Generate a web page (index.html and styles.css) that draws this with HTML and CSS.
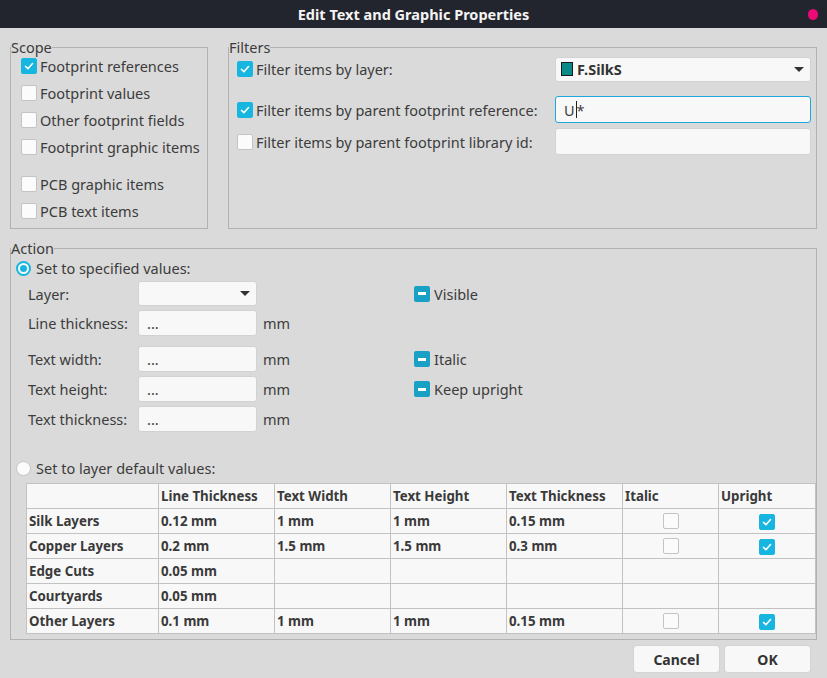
FILE: index.html
```html
<!DOCTYPE html>
<html>
<head>
<meta charset="utf-8">
<link rel="stylesheet" href="styles.css">
</head>
<body>
<div class="window">
  <div class="titlebar">
    <span class="title">Edit Text and Graphic Properties</span>
    <span class="close-dot"></span>
  </div>
  <div class="main">
    <div class="top-row">
      <fieldset class="group scope">
        <legend>Scope</legend>
        <div class="scope-list">
          <label class="check-row"><span class="cb checked"><svg viewBox="0 0 16 16"><polyline points="4,8.5 6.8,11.2 12,5.2"/></svg></span>Footprint references</label>
          <label class="check-row"><span class="cb"></span>Footprint values</label>
          <label class="check-row"><span class="cb"></span>Other footprint fields</label>
          <label class="check-row"><span class="cb"></span>Footprint graphic items</label>
          <label class="check-row spaced"><span class="cb"></span>PCB graphic items</label>
          <label class="check-row"><span class="cb"></span>PCB text items</label>
        </div>
      </fieldset>
      <fieldset class="group filters">
        <legend>Filters</legend>
        <div class="filters-body">
          <div class="filter-row r1">
            <label class="check-row"><span class="cb checked"><svg viewBox="0 0 16 16"><polyline points="4,8.5 6.8,11.2 12,5.2"/></svg></span>Filter items by layer:</label>
            <div class="combo big"><span class="swatch"></span><span class="combo-text">F.SilkS</span><span class="arrow"></span></div>
          </div>
          <div class="filter-row r2">
            <label class="check-row"><span class="cb checked"><svg viewBox="0 0 16 16"><polyline points="4,8.5 6.8,11.2 12,5.2"/></svg></span>Filter items by parent footprint reference:</label>
            <div class="field wide focus">U<span class="caret"></span>*</div>
          </div>
          <div class="filter-row r3">
            <label class="check-row"><span class="cb"></span>Filter items by parent footprint library id:</label>
            <div class="field wide"></div>
          </div>
        </div>
      </fieldset>
    </div>

    <fieldset class="group action">
      <legend>Action</legend>
      <div class="action-body">
        <label class="radio-row"><span class="radio on"><span class="dot"></span></span>Set to specified values:</label>
        <div class="form">
          <span class="lbl">Layer:</span>
          <div class="combo small"><span class="arrow"></span></div>
          <span></span>
          <label class="tri-row"><span class="tri"><span class="bar"></span></span>Visible</label>

          <span class="lbl">Line thickness:</span>
          <div class="field">...</div>
          <span class="unit">mm</span>
          <span></span>

          <span class="lbl gap">Text width:</span>
          <div class="field gap">...</div>
          <span class="unit gap">mm</span>
          <label class="tri-row gap"><span class="tri"><span class="bar"></span></span>Italic</label>

          <span class="lbl">Text height:</span>
          <div class="field">...</div>
          <span class="unit">mm</span>
          <label class="tri-row"><span class="tri"><span class="bar"></span></span>Keep upright</label>

          <span class="lbl">Text thickness:</span>
          <div class="field">...</div>
          <span class="unit">mm</span>
          <span></span>
        </div>
        <label class="radio-row second"><span class="radio"></span>Set to layer default values:</label>
        <table class="grid">
          <colgroup>
            <col class="c0"><col class="c1"><col class="c2"><col class="c3"><col class="c4"><col class="c5"><col class="c6">
          </colgroup>
          <tr><th></th><th>Line Thickness</th><th>Text Width</th><th>Text Height</th><th>Text Thickness</th><th>Italic</th><th>Upright</th></tr>
          <tr><th>Silk Layers</th><td>0.12 mm</td><td>1 mm</td><td>1 mm</td><td>0.15 mm</td><td class="ctr"><span class="cb"></span></td><td class="ctr"><span class="cb checked"><svg viewBox="0 0 16 16"><polyline points="4,8.5 6.8,11.2 12,5.2"/></svg></span></td></tr>
          <tr><th>Copper Layers</th><td>0.2 mm</td><td>1.5 mm</td><td>1.5 mm</td><td>0.3 mm</td><td class="ctr"><span class="cb"></span></td><td class="ctr"><span class="cb checked"><svg viewBox="0 0 16 16"><polyline points="4,8.5 6.8,11.2 12,5.2"/></svg></span></td></tr>
          <tr><th>Edge Cuts</th><td>0.05 mm</td><td></td><td></td><td></td><td></td><td></td></tr>
          <tr><th>Courtyards</th><td>0.05 mm</td><td></td><td></td><td></td><td></td><td></td></tr>
          <tr><th>Other Layers</th><td>0.1 mm</td><td>1 mm</td><td>1 mm</td><td>0.15 mm</td><td class="ctr"><span class="cb"></span></td><td class="ctr"><span class="cb checked"><svg viewBox="0 0 16 16"><polyline points="4,8.5 6.8,11.2 12,5.2"/></svg></span></td></tr>
        </table>
      </div>
    </fieldset>

    <div class="buttons">
      <button class="btn">Cancel</button>
      <button class="btn">OK</button>
    </div>
  </div>
</div>
</body>
</html>
```
FILE: styles.css
```css
* { box-sizing: border-box; }
html, body { margin: 0; padding: 0; }
body {
  width: 827px;
  height: 678px;
  overflow: hidden;
  background: #dadada;
  font-family: "Noto Sans", "Open Sans", sans-serif;
  font-size: 14.5px;
  color: #3c3c3c;
}
.window { width: 827px; height: 678px; background: #dadada; }
.titlebar {
  height: 28px;
  background: #23252e;
  display: flex;
  align-items: center;
  justify-content: center;
  position: relative;
}
.title { color: #f4f4f4; font-weight: bold; font-size: 14.5px; }
.close-dot {
  position: absolute;
  right: 9px;
  top: 9px;
  width: 10px;
  height: 11px;
  border-radius: 50%;
  background: #ec0a78;
}
.main { padding: 11px 10px 0 10px; }
.top-row { display: flex; gap: 20px; height: 190px; }

.group {
  margin: 0;
  padding: 0;
  border: 1px solid #b2b2b2;
  min-width: 0;
}
.group legend {
  padding: 0;
  margin-left: 0;
  line-height: 16px;
  color: #3c3c3c;
}
.scope { width: 198px; flex: none; }
.filters { flex: 1; }

.scope-list { margin-top: -3px; padding-left: 10px; display: flex; flex-direction: column; }
.check-row {
  display: flex;
  align-items: center;
  height: 27px;
  white-space: nowrap;
}
.check-row.spaced { margin-top: 10px; }
.cb {
  width: 16px;
  height: 16px;
  flex: none;
  border: 1px solid #c4c4c4;
  border-radius: 2px;
  background: #fbfbfb;
  margin-right: 3px;
  display: inline-flex;
}
.cb.checked { background: #16b6e0; border-color: #16b6e0; }
.cb svg { width: 14px; height: 14px; }
.cb polyline { fill: none; stroke: #ffffff; stroke-width: 1.8; stroke-linecap: round; stroke-linejoin: round; }

.filters-body { padding: 0 5px 0 8px; }
.filter-row { display: flex; align-items: center; justify-content: space-between; }
.filter-row.r1 { margin-top: 2px; height: 24px; }
.filter-row.r2 { margin-top: 15px; height: 27px; }
.filter-row.r3 { margin-top: 5px; height: 27px; }

.combo {
  background: #f8f8f8;
  border: 1px solid #d2d2d2;
  border-radius: 3px;
  display: flex;
  align-items: center;
  position: relative;
}
.combo.big { width: 256px; height: 25px; padding-left: 5px; }
.combo.small { width: 119px; height: 25px; }
.swatch {
  width: 12px;
  height: 14px;
  background: #0a8a86;
  border: 1px solid #1a1a1a;
  margin-right: 4px;
}
.combo-text { font-weight: bold; color: #333; }
.arrow {
  position: absolute;
  right: 6px;
  top: 9px;
  width: 0;
  height: 0;
  border-left: 5px solid transparent;
  border-right: 5px solid transparent;
  border-top: 5px solid #333;
}
.field {
  background: #f8f8f8;
  border: 1px solid #d2d2d2;
  border-radius: 3px;
  height: 26px;
  width: 119px;
  padding-left: 8px;
  display: flex;
  align-items: center;
  color: #3c3c3c;
}
.field.wide { width: 256px; height: 27px; }
.field.focus { border-color: #1fa7dd; }
.caret { display: inline-block; width: 1px; height: 17px; background: #222; margin: 0 0 0 1px; }

.action { height: 400px; margin-top: 11px; }
.action-body { padding: 0 1px 0 5px; }
.radio-row { display: flex; align-items: center; height: 20px; margin-top: 2px; white-space: nowrap; }
.radio {
  width: 15px;
  height: 15px;
  border-radius: 50%;
  border: 1px solid #c4c4c4;
  background: #fbfbfb;
  margin-right: 5px;
  display: inline-flex;
  align-items: center;
  justify-content: center;
}
.radio.on { border: 2px solid #16b6e0; }
.radio .dot { width: 7px; height: 7px; border-radius: 50%; background: #16b6e0; }

.form {
  display: grid;
  grid-template-columns: 110px 119px 157px auto;
  grid-auto-rows: auto;
  row-gap: 4px;
  align-items: center;
  margin: 3px 0 0 12px;
}
.form > .gap { margin-top: 6px; }
.unit { padding-left: 6px; }
.tri-row { display: flex; align-items: center; white-space: nowrap; }
.tri {
  width: 16px; height: 16px;
  background: #18a1c4;
  border-radius: 2px;
  margin-right: 4px;
  display: inline-flex;
  align-items: center;
  justify-content: center;
}
.tri .bar { width: 8px; height: 3px; background: #fff; }

.radio-row.second { margin-top: 26px; }

.grid {
  margin: 5px 0 0 10px;
  border-collapse: collapse;
  border: 1px solid #3a3a3a;
  table-layout: fixed;
  width: 789px;
  background: #f8f8f8;
}
.grid col.c0 { width: 132px; }
.grid col.c1, .grid col.c2, .grid col.c3, .grid col.c4 { width: 116px; }
.grid col.c5 { width: 96px; }
.grid col.c6 { width: 97px; }
.grid th, .grid td {
  border: 1px solid #c2c2c2;
  height: 25px;
  padding: 0 0 0 2px;
  text-align: left;
  font-weight: bold;
  font-size: 13.3px;
  color: #3a3a3a;
  white-space: nowrap;
}
.grid td.ctr { text-align: center; padding: 0; }
.grid td.ctr .cb { margin: 4px 0 0 0; }
.grid tr { height: 25px; }

.buttons { display: flex; justify-content: flex-end; gap: 6px; padding: 6px 7px 0 0; }
.btn {
  width: 85px;
  height: 26px;
  border: none;
  border-radius: 3px;
  background: #f8f8f8;
  font-family: inherit;
  font-size: 14px;
  font-weight: bold;
  color: #333;
  box-shadow: 0 0 0 1px #d4d4d4;
}
```
